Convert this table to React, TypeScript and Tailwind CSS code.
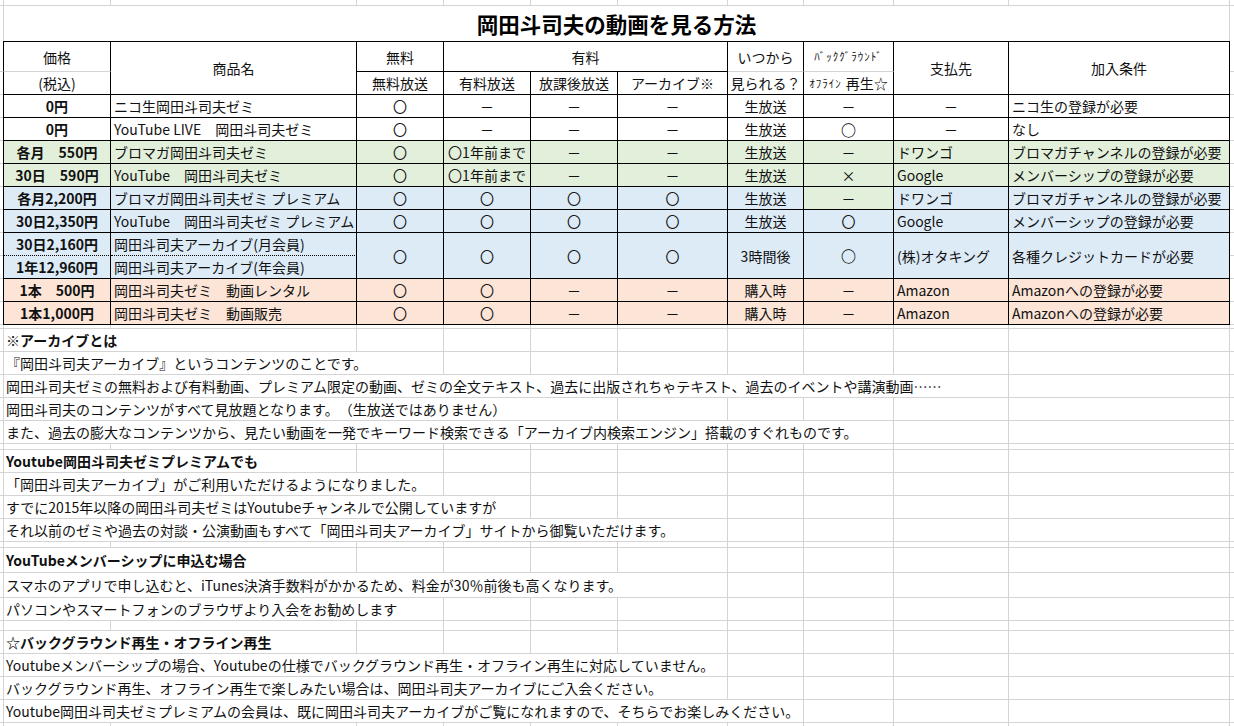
import React from "react";

const GRID_TABLE =
  "grid grid-cols-[3px_108px_246px_87px_87px_87px_110px_76px_90px_115px_221px_1fr] grid-rows-[31px_repeat(11,23px)]";
const GRID_ROW =
  "grid grid-cols-[4px_107px_246px_87px_87px_87px_110px_76px_90px_115px_221px_1fr]";

const GL = "border-r border-b border-[#d4d4d4]";
const BK = "border-r border-b border-black";
const GREEN = "bg-[#e2efda]";
const BLUE = "bg-[#ddebf7]";
const PEACH = "bg-[#fce4d6]";
const WHITE = "bg-white";

const C = "flex items-center justify-center whitespace-nowrap";
const L = "flex items-center whitespace-nowrap pl-[3px]";

type DataRow = {
  bg: string;
  hbg?: string;
  price: string;
  name: string;
  c: string;
  d: string;
  e: string;
  f: string;
  g: string;
  h: string;
  hBig?: boolean;
  i: string;
  iLeft?: boolean;
  j: string;
};

const rows1: DataRow[] = [
  { bg: WHITE, price: "0円", name: "ニコ生岡田斗司夫ゼミ", c: "〇", d: "－", e: "－", f: "－", g: "生放送", h: "－", i: "－", j: "ニコ生の登録が必要" },
  { bg: WHITE, price: "0円", name: "YouTube LIVE　岡田斗司夫ゼミ", c: "〇", d: "－", e: "－", f: "－", g: "生放送", h: "○", hBig: true, i: "－", j: "なし" },
  { bg: GREEN, price: "各月　550円", name: "ブロマガ岡田斗司夫ゼミ", c: "〇", d: "〇1年前まで", e: "－", f: "－", g: "生放送", h: "－", i: "ドワンゴ", iLeft: true, j: "ブロマガチャンネルの登録が必要" },
  { bg: GREEN, price: "30日　590円", name: "YouTube　岡田斗司夫ゼミ", c: "〇", d: "〇1年前まで", e: "－", f: "－", g: "生放送", h: "×", i: "Google", iLeft: true, j: "メンバーシップの登録が必要" },
  { bg: BLUE, hbg: GREEN, price: "各月2,200円", name: "ブロマガ岡田斗司夫ゼミ プレミアム", c: "〇", d: "〇", e: "〇", f: "〇", g: "生放送", h: "－", i: "ドワンゴ", iLeft: true, j: "ブロマガチャンネルの登録が必要" },
  { bg: BLUE, price: "30日2,350円", name: "YouTube　岡田斗司夫ゼミ プレミアム", c: "〇", d: "〇", e: "〇", f: "〇", g: "生放送", h: "〇", i: "Google", iLeft: true, j: "メンバーシップの登録が必要" },
];

const rows2: DataRow[] = [
  { bg: PEACH, price: "1本　500円", name: "岡田斗司夫ゼミ　動画レンタル", c: "〇", d: "〇", e: "－", f: "－", g: "購入時", h: "－", i: "Amazon", iLeft: true, j: "Amazonへの登録が必要" },
  { bg: PEACH, price: "1本1,000円", name: "岡田斗司夫ゼミ　動画販売", c: "〇", d: "〇", e: "－", f: "－", g: "購入時", h: "－", i: "Amazon", iLeft: true, j: "Amazonへの登録が必要" },
];

function renderRow(r: DataRow, k: string) {
  return (
    <React.Fragment key={k}>
      <div className="border-b border-[#d4d4d4]" />
      <div className={`${C} ${BK} border-l ${r.bg} font-bold`}>{r.price}</div>
      <div className={`${L} ${BK} ${r.bg}`}>{r.name}</div>
      <div className={`${C} ${BK} ${r.bg}`}>{r.c}</div>
      <div className={`${C} ${BK} ${r.bg}`}>{r.d}</div>
      <div className={`${C} ${BK} ${r.bg}`}>{r.e}</div>
      <div className={`${C} ${BK} ${r.bg}`}>{r.f}</div>
      <div className={`${C} ${BK} ${r.bg}`}>{r.g}</div>
      <div className={`${C} ${BK} ${r.hbg ?? r.bg} ${r.hBig ? "font-bold text-black text-[15px]" : ""}`}>{r.h}</div>
      <div className={`${r.iLeft ? L : C} ${BK} ${r.bg}`}>{r.i}</div>
      <div className={`${L} ${BK} ${r.bg}`}>{r.j}</div>
      <div className="border-b border-[#d4d4d4]" />
    </React.Fragment>
  );
}

const SPAN: Record<number, string> = {
  2: "col-span-2",
  3: "col-span-3",
  4: "col-span-4",
  5: "col-span-5",
  6: "col-span-6",
  7: "col-span-7",
  8: "col-span-8",
  9: "col-span-9",
};

function TextRow({ h, span, text, bold }: { h: string; span: number; text: string; bold?: boolean }) {
  const rest = 10 - span;
  return (
    <div className={`${GRID_ROW} ${h}`}>
      <div className={GL} />
      <div className={`${SPAN[span]} ${GL} flex items-center pl-[2px] whitespace-nowrap ${bold ? "font-bold" : ""}`}>
        {text}
      </div>
      {Array.from({ length: rest }).map((_, i) => (
        <div key={i} className={GL} />
      ))}
      <div className="border-b border-[#d4d4d4]" />
    </div>
  );
}

function EmptyRow({ h }: { h: string }) {
  return (
    <div className={`${GRID_ROW} ${h}`}>
      <div className={GL} />
      {Array.from({ length: 10 }).map((_, i) => (
        <div key={i} className={GL} />
      ))}
      <div className="border-b border-[#d4d4d4]" />
    </div>
  );
}

export default function App() {
  return (
    <div className="w-[1234px] h-[726px] overflow-hidden bg-white font-['Noto_Sans_CJK_JP',sans-serif] text-[14px] leading-none text-[#111] [text-spacing-trim:space-all]">
      <EmptyRow h="h-[6px]" />
      {/* Title row */}
      <div className={`${GRID_ROW} h-[35px]`}>
        <div className="border-r border-[#d4d4d4]" />
        <div className="col-span-10 border-r border-[#d4d4d4] flex items-center justify-center text-[21.5px] font-bold text-black">
          岡田斗司夫の動画を見る方法
        </div>
        <div />
      </div>

      {/* Table */}
      <div className={GRID_TABLE}>
        {/* header row 1 */}
        <div className="border-b border-[#d4d4d4]" />
        <div className={`${C} ${BK} border-l border-t border-b-[#d4d4d4] pt-[1px]`}>価格</div>
        <div className={`${C} ${BK} border-t row-span-2`}>商品名</div>
        <div className={`${C} ${BK} border-t`}>無料</div>
        <div className={`${C} ${BK} border-t col-span-3`}>有料</div>
        <div className={`${C} ${BK} border-t border-b-[#d4d4d4]`}>いつから</div>
        <div className={`${C} ${BK} border-t border-b-[#d4d4d4] text-[11px] tracking-[1px]`}>ﾊﾞｯｸｸﾞﾗｳﾝﾄﾞ</div>
        <div className={`${C} ${BK} border-t row-span-2`}>支払先</div>
        <div className={`${C} ${BK} border-t row-span-2`}>加入条件</div>
        <div className="border-b border-[#d4d4d4]" />
        {/* header row 2 */}
        <div className="border-b border-[#d4d4d4]" />
        <div className={`${C} ${BK} border-l`}>(税込)</div>
        <div className={`${C} ${BK}`}>無料放送</div>
        <div className={`${C} ${BK}`}>有料放送</div>
        <div className={`${C} ${BK}`}>放課後放送</div>
        <div className={`${C} ${BK}`}>アーカイブ※</div>
        <div className={`${C} ${BK}`}>見られる？</div>
        <div className={`${C} ${BK}`}>
          <span className="text-[11px] tracking-[1px]">ｵﾌﾗｲﾝ</span>
          <span className="ml-[4px]">再生☆</span>
        </div>
        <div className="border-b border-[#d4d4d4]" />

        {rows1.map((r, i) => renderRow(r, "a" + i))}

        {/* merged archive rows */}
        <div className="border-b border-[#d4d4d4]" />
        <div className={`${C} ${BK} border-l ${BLUE} font-bold [border-bottom-style:dotted]`}>30日2,160円</div>
        <div className={`${L} ${BK} ${BLUE} [border-bottom-style:dotted]`}>岡田斗司夫アーカイブ(月会員)</div>
        <div className={`${C} ${BK} ${BLUE} row-span-2`}>〇</div>
        <div className={`${C} ${BK} ${BLUE} row-span-2`}>〇</div>
        <div className={`${C} ${BK} ${BLUE} row-span-2`}>〇</div>
        <div className={`${C} ${BK} ${BLUE} row-span-2`}>〇</div>
        <div className={`${C} ${BK} ${BLUE} row-span-2`}>3時間後</div>
        <div className={`${C} ${BK} ${BLUE} row-span-2 font-bold text-black text-[15px]`}>○</div>
        <div className={`${L} ${BK} ${BLUE} row-span-2`}>(株)オタキング</div>
        <div className={`${L} ${BK} ${BLUE} row-span-2`}>各種クレジットカードが必要</div>
        <div className="border-b border-[#d4d4d4]" />
        <div className="border-b border-[#d4d4d4]" />
        <div className={`${C} ${BK} border-l ${BLUE} font-bold`}>1年12,960円</div>
        <div className={`${L} ${BK} ${BLUE}`}>岡田斗司夫アーカイブ(年会員)</div>
        <div className="border-b border-[#d4d4d4]" />

        {rows2.map((r, i) => renderRow(r, "b" + i))}
      </div>

      <EmptyRow h="h-[4px]" />

      <TextRow h="h-[23px]" span={2} bold text="※アーカイブとは" />
      <TextRow h="h-[23px]" span={3} text="『岡田斗司夫アーカイブ』というコンテンツのことです。" />
      <TextRow h="h-[23px]" span={9} text="岡田斗司夫ゼミの無料および有料動画、プレミアム限定の動画、ゼミの全文テキスト、過去に出版されちゃテキスト、過去のイベントや講演動画……" />
      <TextRow h="h-[23px]" span={5} text="岡田斗司夫のコンテンツがすべて見放題となります。（生放送ではありません）" />
      <TextRow h="h-[23px]" span={8} text="また、過去の膨大なコンテンツから、見たい動画を一発でキーワード検索できる「アーカイブ内検索エンジン」搭載のすぐれものです。" />
      <EmptyRow h="h-[6px]" />

      <TextRow h="h-[23px]" span={2} bold text="Youtube岡田斗司夫ゼミプレミアムでも" />
      <TextRow h="h-[23px]" span={3} text="「岡田斗司夫アーカイブ」がご利用いただけるようになりました。" />
      <TextRow h="h-[23px]" span={4} text="すでに2015年以降の岡田斗司夫ゼミはYoutubeチャンネルで公開していますが" />
      <TextRow h="h-[23px]" span={6} text="それ以前のゼミや過去の対談・公演動画もすべて「岡田斗司夫アーカイブ」サイトから御覧いただけます。" />
      <EmptyRow h="h-[6px]" />

      <TextRow h="h-[25px]" span={2} bold text="YouTubeメンバーシップに申込む場合" />
      <TextRow h="h-[25px]" span={6} text="スマホのアプリで申し込むと、iTunes決済手数料がかかるため、料金が30％前後も高くなります。" />
      <TextRow h="h-[23px]" span={3} text="パソコンやスマートフォンのブラウザより入会をお勧めします" />
      <EmptyRow h="h-[10px]" />

      <TextRow h="h-[23px]" span={2} bold text="☆バックグラウンド再生・オフライン再生" />
      <TextRow h="h-[23px]" span={6} text="Youtubeメンバーシップの場合、Youtubeの仕様でバックグラウンド再生・オフライン再生に対応していません。" />
      <TextRow h="h-[23px]" span={6} text="バックグラウンド再生、オフライン再生で楽しみたい場合は、岡田斗司夫アーカイブにご入会ください。" />
      <TextRow h="h-[23px]" span={7} text="Youtube岡田斗司夫ゼミプレミアムの会員は、既に岡田斗司夫アーカイブがご覧になれますので、そちらでお楽しみください。" />
      <EmptyRow h="h-[10px]" />
    </div>
  );
}
